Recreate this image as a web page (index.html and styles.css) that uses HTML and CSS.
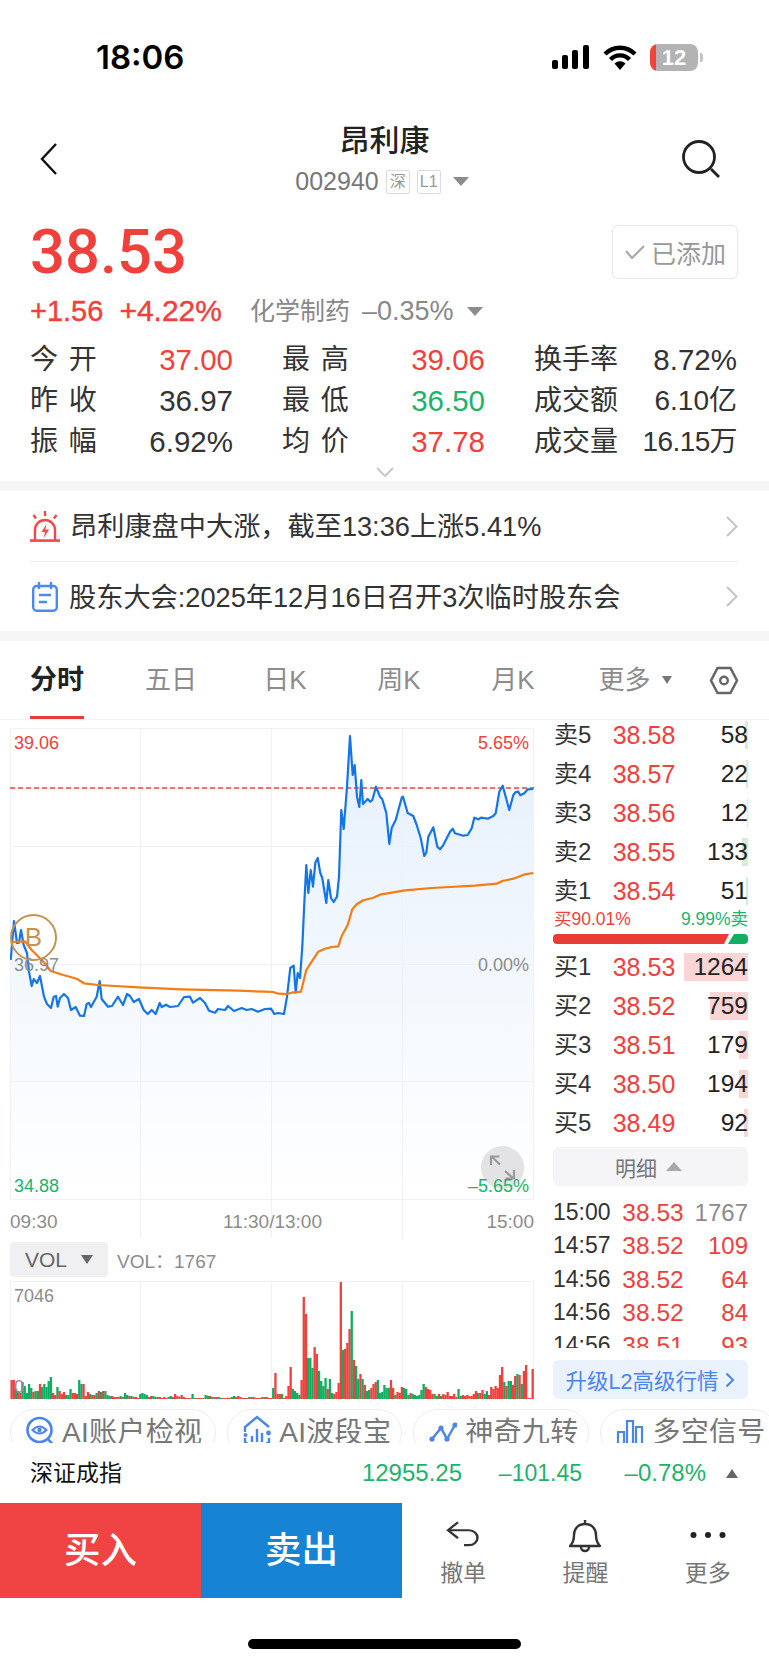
FILE: index.html
```html
<!DOCTYPE html>
<html lang="zh-CN">
<head>
    <meta charset="UTF-8">
    <title>昂利康 002940</title>
    <meta name="viewport" content="width=device-width, initial-scale=1.0">
    <link rel="stylesheet" href="styles.css">
</head>
<body>
    <div class="status">
        <span class="clock">18:06</span>
        <div class="status-icons">
            <svg class="signal" width="38" height="24" viewBox="0 0 38 24"><rect x="0" y="15" width="6" height="9" rx="2"/><rect x="10" y="10" width="6" height="14" rx="2"/><rect x="20" y="5" width="6" height="19" rx="2"/><rect x="31" y="0" width="6" height="24" rx="2"/></svg>
            <svg class="wifi" width="34" height="25" viewBox="0 0 34 25"><path d="M2 9a21 21 0 0 1 30 0M7.5 14.5a13 13 0 0 1 19 0" fill="none" stroke="#000" stroke-width="4.4"/><path d="M11.5 18.5a8 8 0 0 1 11 0L17 25z"/></svg>
            <div class="battery">12</div>
        </div>
    </div>

    <div class="nav">
        <svg class="back" width="18" height="32" viewBox="0 0 18 32"><polyline points="16,1 2,16 16,31" fill="none" stroke="#111" stroke-width="2.4"/></svg>
        <div class="nav-mid">
            <div class="stock-name">昂利康</div>
            <div class="stock-code">
                <span>002940</span>
                <span class="tag">深</span>
                <span class="tag">L1</span>
                <i class="tri-down code-tri"></i>
            </div>
        </div>
        <svg class="search" width="38" height="38" viewBox="0 0 38 38"><circle cx="17" cy="17" r="15.5" fill="none" stroke="#222" stroke-width="2.8"/><line x1="29" y1="29" x2="37" y2="37" stroke="#222" stroke-width="2.8"/></svg>
    </div>

    <div class="quote">
        <div class="quote-top">
            <div class="price">38.53</div>
            <div class="add-btn">
                <svg width="20" height="14" viewBox="0 0 20 14"><polyline points="1,6 7,13 19,1" fill="none" stroke="#aaa" stroke-width="2.2"/></svg>
                <span>已添加</span>
            </div>
        </div>
        <div class="change">
            <span class="chg up">+1.56</span>
            <span class="chg up chg-pct">+4.22%</span>
            <span class="sector">化学制药</span>
            <span class="sector sector-pct">–0.35%</span>
            <i class="tri-down sector-tri"></i>
        </div>
        <div class="stats">
            <div class="stat"><span class="sp">今 开</span><span class="num up">37.00</span></div>
            <div class="stat"><span class="sp">最 高</span><span class="num up">39.06</span></div>
            <div class="stat"><span>换手率</span><span class="num">8.72%</span></div>
            <div class="stat"><span class="sp">昨 收</span><span class="num">36.97</span></div>
            <div class="stat"><span class="sp">最 低</span><span class="num down">36.50</span></div>
            <div class="stat"><span>成交额</span><span>6.10亿</span></div>
            <div class="stat"><span class="sp">振 幅</span><span class="num">6.92%</span></div>
            <div class="stat"><span class="sp">均 价</span><span class="num up">37.78</span></div>
            <div class="stat"><span>成交量</span><span class="narrow">16.15万</span></div>
        </div>
        <div class="expand">
            <svg width="18" height="10" viewBox="0 0 18 10"><polyline points="1,1 9,9 17,1" fill="none" stroke="#c8c8c8" stroke-width="2"/></svg>
        </div>
    </div>

    <div class="band"></div>

    <div class="news">
        <div class="news-row">
            <svg class="news-icon" width="30" height="31" viewBox="0 0 30 31"><path d="M5 29V19a10 10 0 0 1 20 0v10" fill="none" stroke="#ef4a46" stroke-width="2.4"/><path d="M0 29.6h30" stroke="#ef4a46" stroke-width="2.6"/><path d="M16.5 13l-5 8h3.6l-1.4 6 5.4-8.4h-3.7z" fill="#ef4a46"/><path d="M15 0v5M3.5 4L6 7.5M26.5 4L24 7.5" stroke="#ef4a46" stroke-width="2.4"/></svg>
            <span class="news-text">昂利康盘中大涨，截至13:36上涨5.41%</span>
            <svg class="news-arrow" width="12" height="21" viewBox="0 0 12 21"><polyline points="1,1 10.5,10.5 1,20" fill="none" stroke="#c4c4c4" stroke-width="2"/></svg>
        </div>
        <div class="news-row news-line">
            <svg class="news-icon note" width="26" height="30" viewBox="0 0 26 30"><rect x="1.2" y="4" width="23.6" height="24.8" rx="3.5" fill="none" stroke="#4a8af0" stroke-width="2.4"/><path d="M7 0v7M19 0v7" stroke="#4a8af0" stroke-width="2.4"/><path d="M7 13h12M7 20h8" stroke="#4a8af0" stroke-width="2.4"/></svg>
            <span class="news-text">股东大会:2025年12月16日召开3次临时股东会</span>
            <svg class="news-arrow" width="12" height="21" viewBox="0 0 12 21"><polyline points="1,1 10.5,10.5 1,20" fill="none" stroke="#c4c4c4" stroke-width="2"/></svg>
        </div>
    </div>

    <div class="band"></div>

    <div class="tabs">
        <div class="tab on">分时</div>
        <div class="tab">五日</div>
        <div class="tab">日K</div>
        <div class="tab">周K</div>
        <div class="tab">月K</div>
        <div class="tab tab-more">更多<i class="tri-down more-tri"></i></div>
        <svg class="hex" width="30" height="29" viewBox="0 0 30 29"><path d="M8.5 2h13L28 14.5 21.5 27h-13L2 14.5z" fill="none" stroke="#666" stroke-width="2.6" stroke-linejoin="round"/><circle cx="15" cy="14.5" r="3.8" fill="none" stroke="#666" stroke-width="2.4"/></svg>
    </div>

    <div class="main">
        <div class="left">
            <div class="chart">
                <svg class="chart-svg" width="524" height="510" viewBox="10 728 524 510">
                    <defs>
                        <linearGradient id="area" x1="0" y1="0" x2="0" y2="1">
                            <stop offset="0" stop-color="#1976e6" stop-opacity="0.11"/>
                            <stop offset="1" stop-color="#1976e6" stop-opacity="0"/>
                        </linearGradient>
                    </defs>
                    <polygon id="price-fill" fill="url(#area)"/>
                    <path d="M10.5 728V1199M533.5 728V1199M140.5 728V1238M271.5 728V1238M402.5 728V1238M10 728.5H534M10 846.5H534M10 964.5H534M10 1081.5H534M10 1199.5H534" fill="none" stroke="#f0f1f4" stroke-width="1"/>
                    <line x1="10" y1="788" x2="534" y2="788" stroke="#f0403c" stroke-width="1.4" stroke-dasharray="5 3"/>
                    <polyline id="price-line" fill="none" stroke="#1476e6" stroke-width="2.2" stroke-linejoin="round" points="10.7,960 14,921 17,943 19,942.7 21,930 23.7,945 27,953 29,971.7 31.7,986 33.7,979 37,983 40,976 44,996.7 47,1004 51,1008 53.7,996.7 56,996 57.7,1006.7 60,998 64,994 68,998 71,1010 75.7,1007 80,1015.7 84,1016 86.7,1004 89,1003 91,1007 96.7,996.7 99.7,981 101.7,999 108,1006.7 112,1006 118,996.7 123,1005 127,994 130,996 133.7,1002 139,999 143.7,1010 147.7,1014 151.7,1010 155.7,1014 159.7,1003 161.7,1007 166,1004.7 170,1007 178,1006 184,997 190,996.7 193,1002.7 200,998 205,1003 209,1010.7 215,1012.7 218,1009 225,1010 228,1006 234,1011 241.7,1008 246.7,1010 251.7,1009 258,1011.7 265,1009 271,1008.7 274.3,1014 278,1013 284,1014 287,996.7 290.3,968 293.7,965.7 295.7,992.7 297.7,973 300,978 302.3,946.7 304.3,903 306.3,865 308.3,893 310.7,870 313,886.7 315.3,862.7 317.7,858 320.3,873 322.3,878 326.3,903 328.3,880 331,898 333.7,902 337,896.7 339,876.7 341.3,810 343.7,829 347,786.7 350,736 352.7,775 354.7,765 357,796.7 359.3,807 361.3,780 363,804 367.7,799 370.3,801.7 372.3,800 376,786.7 380,796.7 382.3,799.3 386.3,813 389.3,844 391.7,828 395.7,820 401.7,797.7 403,796.7 407.7,813 413.3,816 416.7,825 420.7,838 424.3,856 426.3,852.7 428.3,836.7 433.3,827.3 437.3,846.7 440,849.3 443.3,845 450,831.7 452.7,828.7 455,833.3 463.3,835.7 467.7,835 471.7,828.3 474.3,817.7 478.3,819.3 481,817.7 487.7,818.7 493.3,816 495.7,813.3 499.3,791.7 502.7,785.7 505.7,796.7 509.3,810 513.3,795 515.7,792 518.3,791.7 520.3,795.3 524.3,793.3 527.7,789.3 533.3,789"/>
                    <polyline fill="none" stroke="#f57c12" stroke-width="2.2" stroke-linejoin="round" points="10.7,943 13,942 25,941.3 31.7,950 43.3,961.7 50.7,971 63.3,975 76.7,978.7 84,983.3 98.3,985 138.3,987.3 181.7,989.3 238.3,990.7 265,991.7 273.3,992 278.3,993.7 286.7,994 291.7,992.7 301,991.7 306.3,970 311.7,961.7 318.3,951.7 325,948.7 331.7,947 338.3,946.3 341.7,936 347.7,925 352.3,909.3 356.7,904.3 363.3,900.3 373.3,897.7 380,894.7 391.7,892.7 405,890.3 431.7,888 475,885.7 496.7,883.7 502.3,881 513.3,878.7 525,874.3 533.3,873"/>
                </svg>
                <span class="axis top-left up">39.06</span>
                <span class="axis top-right up">5.65%</span>
                <span class="axis mid-left gray">36.97</span>
                <span class="axis mid-right gray">0.00%</span>
                <span class="axis low-left down">34.88</span>
                <div class="zoom-btn">
                    <svg width="43" height="43" viewBox="0 0 43 43"><path d="M10 19V10.5H18.5M10.5 10.5L19 18.5M33 24V32.5H24.5M32.5 32.5L24 25" fill="none" stroke="#9a9a9e" stroke-width="2.2"/></svg>
                </div>
                <span class="axis low-right down">–5.65%</span>
                <div class="marker">B</div>
                <span class="time t-open">09:30</span>
                <span class="time t-noon">11:30/13:00</span>
                <span class="time t-close">15:00</span>
            </div>
            <div class="vol-head">
                <div class="vol-pick">VOL<i class="tri-down vol-tri"></i></div>
                <span class="vol-val">VOL：1767</span>
            </div>
            <div class="vol-chart">
                <svg id="vol-svg" width="524" height="118" viewBox="10 1281 524 118">
                    <path d="M10.5 1281V1399M140.5 1281V1399M271.5 1281V1399M402.5 1281V1399M533.5 1281V1399M10 1281.5H534" fill="none" stroke="#f0f1f4" stroke-width="1"/>
                </svg>
                <span class="vol-max">7046</span>
                <span class="vol-min">0</span>
            </div>
        </div>

        <div class="right">
            <div class="book">
                <div class="book-row"><span>卖5</span><span class="up book-price">38.58</span><span class="book-qty">58</span><i class="qty-bar sell" style="width:3px"></i></div>
                <div class="book-row"><span>卖4</span><span class="up book-price">38.57</span><span class="book-qty">22</span><i class="qty-bar sell" style="width:2px"></i></div>
                <div class="book-row"><span>卖3</span><span class="up book-price">38.56</span><span class="book-qty">12</span><i class="qty-bar sell" style="width:1px"></i></div>
                <div class="book-row"><span>卖2</span><span class="up book-price">38.55</span><span class="book-qty">133</span><i class="qty-bar sell" style="width:6px"></i></div>
                <div class="book-row"><span>卖1</span><span class="up book-price">38.54</span><span class="book-qty">51</span><i class="qty-bar sell" style="width:2px"></i></div>
            </div>
            <div class="ratio">
                <span class="up">买90.01%</span>
                <span class="down">9.99%卖</span>
            </div>
            <svg class="ratio-bar" width="195" height="10" viewBox="0 0 195 10"><path d="M4 0H176L171 10H4Q0 10 0 6V4Q0 0 4 0Z" fill="#e93c36"/><path d="M181 0H191Q195 0 195 4V6Q195 10 191 10H175Z" fill="#13ad64"/></svg>
            <div class="book book-buy">
                <div class="book-row"><span>买1</span><span class="up book-price">38.53</span><span class="book-qty">1264</span><i class="qty-bar buy" style="width:64px"></i></div>
                <div class="book-row"><span>买2</span><span class="up book-price">38.52</span><span class="book-qty">759</span><i class="qty-bar buy" style="width:38px"></i></div>
                <div class="book-row"><span>买3</span><span class="up book-price">38.51</span><span class="book-qty">179</span><i class="qty-bar buy" style="width:9px"></i></div>
                <div class="book-row"><span>买4</span><span class="up book-price">38.50</span><span class="book-qty">194</span><i class="qty-bar buy" style="width:9px"></i></div>
                <div class="book-row"><span>买5</span><span class="up book-price">38.49</span><span class="book-qty">92</span><i class="qty-bar buy" style="width:4px"></i></div>
            </div>
            <div class="detail-btn">明细<i class="tri-up detail-tri"></i></div>
            <div class="trades">
                <div class="trade"><span>15:00</span><span class="up trade-price">38.53</span><span class="gray trade-qty">1767</span></div>
                <div class="trade"><span>14:57</span><span class="up trade-price">38.52</span><span class="up trade-qty">109</span></div>
                <div class="trade"><span>14:56</span><span class="up trade-price">38.52</span><span class="up trade-qty">64</span></div>
                <div class="trade"><span>14:56</span><span class="up trade-price">38.52</span><span class="up trade-qty">84</span></div>
                <div class="trade"><span>14:56</span><span class="up trade-price">38.51</span><span class="up trade-qty">93</span></div>
            </div>
            <div class="l2-btn">升级L2高级行情<svg width="10" height="16" viewBox="0 0 10 16"><polyline points="1.5,1.5 8,8 1.5,14.5" fill="none" stroke="#4a86e8" stroke-width="2"/></svg></div>
        </div>
    </div>

    <div class="chips">
        <div class="chip">
            <svg width="27" height="36" viewBox="0 0 27 36"><circle cx="13.5" cy="15" r="12" fill="none" stroke="#4a86e8" stroke-width="2.6"/><path d="M22 24l6 7" stroke="#4a86e8" stroke-width="2.6"/><path d="M6.5 15q7-7 14 0q-7 7-14 0z" fill="none" stroke="#4a86e8" stroke-width="2"/><circle cx="13.5" cy="15" r="2.2" fill="#4a86e8"/></svg>
            <span>AI账户检视</span>
        </div>
        <div class="chip">
            <svg width="28" height="36" viewBox="0 0 28 36"><path d="M2 17v-5L14 2l12 10M2 23v4l7 5M26 23v4l-7 5" fill="none" stroke="#4a86e8" stroke-width="2.4"/><path d="M9 21v6M14 14v13M19 18v9" stroke="#4a86e8" stroke-width="2.4"/><circle cx="2.5" cy="20" r="2" fill="#4a86e8"/><circle cx="25.5" cy="18" r="2.4" fill="#4a86e8"/></svg>
            <span>AI波段宝</span>
        </div>
        <div class="chip">
            <svg width="28" height="24" viewBox="0 0 28 24"><polyline points="3,18 12,7 18,18 26,4" fill="none" stroke="#4a86e8" stroke-width="2.4"/><circle cx="3" cy="18" r="2.6" fill="#4a86e8"/><circle cx="12" cy="7" r="2.6" fill="#4a86e8"/><circle cx="18" cy="18" r="2.6" fill="#4a86e8"/><circle cx="26" cy="4" r="2.6" fill="#4a86e8"/></svg>
            <span>神奇九转</span>
        </div>
        <div class="chip">
            <svg width="28" height="28" viewBox="0 0 28 28"><path d="M2 13h6v14H2zM11 2h6v25h-6zM20 8h6v19h-6z" fill="none" stroke="#4a86e8" stroke-width="2.2"/></svg>
            <span>多空信号</span>
        </div>
    </div>

    <div class="index">
        <div class="index-first"><span class="index-name">深证成指</span><span class="down index-num">12955.25</span></div>
        <span class="down index-val">–101.45</span>
        <span class="down index-val index-num">–0.78%</span>
        <i class="tri-up index-tri"></i>
    </div>

    <div class="bottom">
        <div class="trade-btn buy-btn">买入</div>
        <div class="trade-btn sell-btn">卖出</div>
        <div class="actions">
            <div class="action">
                <svg width="36" height="36" viewBox="0 0 36 36"><path d="M13 6L3 15l10 9M3 15h21a8.5 8.5 0 0 1 0 17h-5" fill="none" stroke="#333" stroke-width="2.4" transform="translate(0 -1) scale(1 .88)"/></svg>
                <span>撤单</span>
            </div>
            <div class="action">
                <svg width="36" height="36" viewBox="0 0 36 36"><path d="M3 28c3-3 4-6 4-11 0-6 4-11 11-11s11 5 11 11c0 5 1 8 4 11z" fill="none" stroke="#333" stroke-width="2.4" stroke-linejoin="round"/><path d="M18 6V2" stroke="#333" stroke-width="2.4"/><path d="M14 29a4 4 0 0 0 8 0" fill="none" stroke="#333" stroke-width="2.4"/></svg>
                <span>提醒</span>
            </div>
            <div class="action">
                <svg width="36" height="36" viewBox="0 0 36 36"><circle cx="3.5" cy="17" r="3" fill="#222"/><circle cx="18" cy="17" r="3" fill="#222"/><circle cx="32.5" cy="17" r="3" fill="#222"/></svg>
                <span>更多</span>
            </div>
        </div>
    </div>

    <div class="home-bar"></div>

    <script src="chart.js"></script>
</body>
</html>
```

FILE: styles.css
```css
body {
    font-family: "Liberation Sans", "Noto Sans CJK SC", sans-serif;
    margin: 0;
    padding: 0;
    width: 769px;
    height: 1665px;
    overflow: hidden;
    background: #fff;
    color: #333;
}
i {
    display: block;
    font-style: normal;
}
.up { color: #f0403c; }
.down { color: #1cb36b; }
.gray { color: #8c8c8c; }

.tri-down, .tri-up {
    width: 0;
    height: 0;
    border-left: 8px solid transparent;
    border-right: 8px solid transparent;
}
.tri-down { border-top: 9px solid #8c8c8c; }
.tri-up { border-bottom: 9px solid #a8a8a8; }

/* status bar */
.status {
    height: 114px;
    display: flex;
    justify-content: space-between;
    align-items: center;
    padding: 0 71px 0 96px;
}
.clock {
    font-family: Inter, sans-serif;
    font-size: 33px;
    font-weight: 600;
    color: #000;
}
.status-icons {
    display: flex;
    align-items: center;
    gap: 13px;
}
.battery {
    position: relative;
    width: 48px;
    height: 27px;
    line-height: 27px;
    border-radius: 8px;
    background: linear-gradient(90deg, #f0433a 6px, #b3b3b3 6px);
    color: #fff;
    font-size: 22px;
    font-weight: bold;
    text-align: center;
}
.battery::after {
    content: "";
    position: absolute;
    right: -5px;
    top: 9px;
    width: 3px;
    height: 9px;
    border-radius: 0 2px 2px 0;
    background: #c4c4c4;
}

/* title */
.nav {
    display: grid;
    grid-template-columns: 1fr auto 1fr;
    align-items: start;
    padding: 7px 40px 0;
    height: 81px;
}
.back {
    margin-top: 22px;
}
.search {
    justify-self: end;
    margin: 19px 9px 0 0;
}
.stock-name {
    font-size: 30px;
    font-weight: 500;
    line-height: 40px;
    color: #222;
    text-align: center;
}
.stock-code {
    display: flex;
    align-items: center;
    height: 41px;
    margin-right: 5px;
    font-size: 25px;
    color: #777;
}
.tag {
    width: 24px;
    height: 24px;
    margin-left: 7px;
    box-sizing: border-box;
    border: 1px solid #ddd;
    border-radius: 2px;
    font-size: 16px;
    line-height: 22px;
    text-align: center;
    color: #999;
}
.code-tri {
    margin-left: 12px;
}

/* quote */
.quote {
    padding: 23px 31px 0 30px;
}
.quote-top {
    display: flex;
    justify-content: space-between;
}
.price {
    font-family: Roboto, sans-serif;
    font-size: 61.5px;
    font-weight: 500;
    line-height: 54px;
    color: #f0403c;
}
.add-btn {
    display: flex;
    align-items: center;
    gap: 6px;
    width: 126px;
    height: 54px;
    box-sizing: border-box;
    padding-left: 12px;
    border: 1px solid #e6e6e6;
    border-radius: 6px;
    font-size: 25px;
    color: #999;
}
.change {
    display: flex;
    align-items: center;
    height: 36px;
    margin-top: 14px;
    line-height: 36px;
}
.chg {
    font-size: 29px;
    -webkit-text-stroke: 0.4px;
}
.chg-pct {
    margin-left: 16px;
    font-size: 30px;
}
.sector {
    font-size: 25px;
    color: #888;
    margin-left: 28px;
}
.sector-pct {
    margin-left: 12px;
    font-size: 27px;
}
.sector-tri {
    margin-left: 13px;
}
.stats {
    display: grid;
    grid-template-columns: repeat(3, 203px);
    grid-auto-rows: 41px;
    column-gap: 49px;
    margin-top: 10px;
}
.stat {
    display: flex;
    justify-content: space-between;
    align-items: center;
    font-size: 28px;
    line-height: 41px;
}
.num {
    font-size: 29.5px;
}
.narrow {
    letter-spacing: -0.6px;
}
.sp {
    word-spacing: 3px;
}
.expand {
    height: 19px;
    display: flex;
    justify-content: center;
    align-items: center;
    margin-left: 1px;
}
.band {
    height: 10px;
    background: #f6f6f6;
}

/* news */
.news {
    padding: 0 31px 0 30px;
}
.news-row {
    display: flex;
    align-items: center;
    height: 70px;
}
.news-line {
    border-top: 1px solid #f0f0f0;
    height: 69px;
}
.news-icon {
    margin-right: 10px;
}
.note {
    margin: 0 11px 0 2px;
}
.news-text {
    flex: 1;
    font-size: 27.2px;
    line-height: 40px;
    margin-top: 2px;
}
.news-arrow {
    flex: none;
}

/* tabs */
.tabs {
    display: grid;
    grid-template-columns: repeat(6, 114px) 1fr;
    align-items: start;
    height: 78px;
    border-bottom: 1px solid #f3f3f3;
}
.tab {
    justify-self: center;
    height: 78px;
    line-height: 78px;
    box-sizing: border-box;
    font-size: 26px;
    color: #8c8c8c;
}
.tab.on {
    color: #222;
    font-size: 27px;
    font-weight: bold;
    border-bottom: 3px solid #e53b3b;
}
.tab-more {
    display: flex;
    align-items: center;
    margin-left: 16px;
}
.more-tri {
    margin-left: 11px;
    border-left-width: 5px;
    border-right-width: 5px;
    border-top-width: 8px;
    border-top-color: #777;
}
.hex {
    margin: 25px 0 0 25px;
}

/* chart */
.main {
    display: flex;
    height: 689px;
}
.left {
    width: 524px;
    padding: 8px 0 0 10px;
}
.chart {
    position: relative;
    width: 524px;
    height: 510px;
}
.chart-svg {
    display: block;
}
.axis {
    position: absolute;
    font-size: 18px;
    line-height: 20px;
}
.top-left { left: 4px; top: 5px; }
.top-right { right: 5px; top: 5px; }
.mid-left { left: 4px; top: 227px; }
.mid-right { right: 5px; top: 227px; }
.low-left { left: 4px; top: 448px; }
.low-right { right: 5px; top: 448px; }
.zoom-btn {
    position: absolute;
    left: 471px;
    top: 418px;
    width: 43px;
    height: 43px;
    border-radius: 50%;
    background: rgba(190, 190, 195, 0.42);
}
.marker {
    position: absolute;
    left: 0;
    top: 186px;
    width: 47px;
    height: 47px;
    box-sizing: border-box;
    border: 2px solid #c39450;
    border-radius: 50%;
    color: #c39450;
    font-size: 26px;
    line-height: 43px;
    text-align: center;
}
.time {
    position: absolute;
    top: 482px;
    font-size: 19px;
    line-height: 24px;
    color: #8c8c8c;
}
.t-open { left: 0; }
.t-noon { left: 213px; }
.t-close { right: 0; }
.vol-head {
    display: flex;
    align-items: center;
    margin-top: 4px;
}
.vol-pick {
    display: flex;
    align-items: center;
    width: 98px;
    height: 35px;
    box-sizing: border-box;
    padding-left: 15px;
    border-radius: 4px;
    background: #f0f0f2;
    font-size: 21px;
    color: #666;
}
.vol-tri {
    margin-left: 14px;
    border-left-width: 6px;
    border-right-width: 6px;
    border-top-color: #666;
}
.vol-val {
    margin-left: 9px;
    font-size: 19px;
    color: #8c8c8c;
}
.vol-chart {
    position: relative;
    margin-top: 4px;
    height: 118px;
}
#vol-svg {
    display: block;
}
.vol-max {
    position: absolute;
    left: 4px;
    top: 5px;
    font-size: 18px;
    line-height: 20px;
    color: #8c8c8c;
}
.vol-min {
    position: absolute;
    left: 4px;
    bottom: 2px;
    font-size: 18px;
    line-height: 20px;
    color: #8c8c8c;
}

/* order book */
.right {
    width: 195px;
    margin-left: 19px;
    padding-top: 1px;
}
.book {
    display: flex;
    flex-direction: column;
    gap: 11px;
}
.book-buy {
    margin-top: 9px;
}
.book-row {
    position: relative;
    display: grid;
    grid-template-columns: 58px 64px 1fr;
    align-items: center;
    height: 28px;
    line-height: 28px;
    font-size: 24px;
    padding-left: 1px;
}
.book-row span {
    position: relative;
    z-index: 1;
}
.book-price {
    font-size: 25px;
    text-align: center;
}
.book-qty {
    text-align: right;
    font-size: 24.5px;
    color: #222;
}
.qty-bar {
    position: absolute;
    right: 0;
    top: 0;
    bottom: 0;
}
.qty-bar.sell { background: #d5ecd8; }
.qty-bar.buy { background: #f9d5d5; }
.ratio {
    display: flex;
    justify-content: space-between;
    align-items: center;
    height: 29px;
    line-height: 29px;
    font-size: 17.5px;
    padding-left: 1px;
}
.ratio-bar {
    display: block;
}
.detail-btn {
    display: flex;
    justify-content: center;
    align-items: center;
    height: 39px;
    margin-top: 10px;
    padding-right: 4px;
    border-radius: 6px;
    background: #f5f5f7;
    font-size: 21px;
    color: #777;
}
.detail-tri {
    margin-left: 9px;
}
.trades {
    height: 162px;
    overflow: hidden;
    padding-top: 10px;
    box-sizing: border-box;
}
.trade {
    display: grid;
    grid-template-columns: 69px 62px 1fr;
    align-items: center;
    height: 33.3px;
    line-height: 33px;
    font-size: 23px;
}
.trade-price {
    font-size: 24.5px;
    text-align: center;
}
.trade-qty {
    font-size: 24px;
    text-align: right;
}
.l2-btn {
    display: flex;
    justify-content: center;
    align-items: center;
    gap: 7px;
    height: 39px;
    margin-top: 12px;
    border-radius: 6px;
    background: #eaf2fe;
    font-size: 21.5px;
    color: #4a86e8;
}

/* chips */
.chips {
    display: flex;
    align-items: flex-start;
    gap: 11px;
    height: 34px;
    overflow: hidden;
    padding-left: 10px;
}
.chip {
    flex: none;
    display: flex;
    align-items: center;
    gap: 8px;
    height: 48px;
    box-sizing: border-box;
    padding: 0 10px 1px 15px;
    border: 1px solid #eee;
    border-radius: 24px;
    font-size: 28px;
    line-height: 40px;
    letter-spacing: 0.3px;
    color: #777;
}
.chip:first-child {
    padding-right: 13px;
}
.chip:first-child svg {
    margin-right: 1px;
}

/* index row */
.index {
    display: grid;
    grid-template-columns: 432px 120px 124px 1fr;
    align-items: center;
    height: 60px;
    line-height: 60px;
    padding-left: 30px;
    font-size: 23px;
}
.index-first {
    display: flex;
    justify-content: space-between;
}
.index-name {
    color: #111;
}
.index-num {
    font-size: 24px;
}
.index-val {
    text-align: right;
}
.index-tri {
    margin-left: 20px;
    border-left-width: 6px;
    border-right-width: 6px;
    border-bottom-color: #666;
}

/* bottom bar */
.bottom {
    display: flex;
    height: 95px;
}
.trade-btn {
    width: 201px;
    line-height: 95px;
    text-align: center;
    color: #fff;
    font-size: 36.5px;
    font-weight: 500;
}
.buy-btn { background: #f04343; }
.sell-btn { background: #1783d4; }
.actions {
    flex: 1;
    display: grid;
    grid-template-columns: repeat(3, 1fr);
}
.action {
    display: flex;
    flex-direction: column;
    align-items: center;
    padding-top: 15px;
    font-size: 23px;
    color: #777;
}
.action span {
    line-height: 36px;
    margin-top: 1px;
}
.home-bar {
    width: 273px;
    height: 10px;
    margin: 41px auto 0;
    border-radius: 5px;
    background: #000;
}
```

FILE: chart.js
```js
// share price area is the same outline closed along the bottom grid line
const line = document.getElementById('price-line');
document.getElementById('price-fill').setAttribute('points', line.getAttribute('points') + ' 533.3,1199 10.7,1199');

// volume bars: positive is red, negative is green
const morning = [
    19, 19, -10, 8, 6, -17, -13, -6, -15, -11,
    7, -8, -8, 15, -12, -15, -12, -18, -22, 6,
    4, -12, 8, 5, 7, -4, -4, -10, 6, 6,
    5, -19, -15, 15, 3, 7, -5, 4, 4, -6,
    8, -7, 8, -8, -4, -3, 3, 2, 2, 2,
    -3, 2, -6, -4, 3, -3, 2, 2, 1, -5,
    -6, -5, -4, 2, 3, -3, -2, 2, 2, 1,
    2, 1, -2, -3, 2, 5, 3, -2, 4, 2,
    1, 1, 1, -5, -1, 1, 1, 1, 1, -4,
    -3, 3, -2, 2, 2, -2, -1, 1, 1, 1,
    1, -2, -3, 2, 3, 2, 1, 1, 1, -2,
    2, 2, 1, 1, 1, -2, 2, 2, 1, 1
];
const afternoon = [
    -11, 26, 5, 5, -5, 1, 3, 13, 32, -10,
    -8, -6, -4, 19, 102, 85, -41, -41, -31, 52,
    45, -28, -18, -13, -21, 10, -20, -6, 5, 7,
    16, 117, -49, 50, 56, 70, -88, 39, -33, -20,
    25, -20, 14, -8, -9, 11, 15, 17, -19, -6,
    -7, -14, -11, -11, 19, 11, -4, 7, 6, 12,
    -11, -10, -4, 6, -5, -4, -3, -4, -9, -15,
    12, 10, 9, 5, -5, -3, 5, -3, 5, 4,
    7, 3, 3, 5, 2, -10, -3, 4, 3, 4,
    3, 3, 5, 8, -6, 6, 9, -5, -8, 4,
    12, 10, 13, 11, 24, 32, -17, 13, -18, -18,
    14, 23, -25, 24, -15, 28, 34, 1, 1, 30
];

const svg = document.getElementById('vol-svg');
morning.concat(afternoon).forEach(function (v, i) {
    const h = Math.abs(v);
    const bar = document.createElementNS('http://www.w3.org/2000/svg', 'rect');
    bar.setAttribute('x', (10.5 + i * 2.18).toFixed(2));
    bar.setAttribute('y', 1399 - h);
    bar.setAttribute('width', 2.3);
    bar.setAttribute('height', h);
    bar.setAttribute('fill', v > 0 ? '#f0403c' : '#0fad62');
    svg.appendChild(bar);
});
```
